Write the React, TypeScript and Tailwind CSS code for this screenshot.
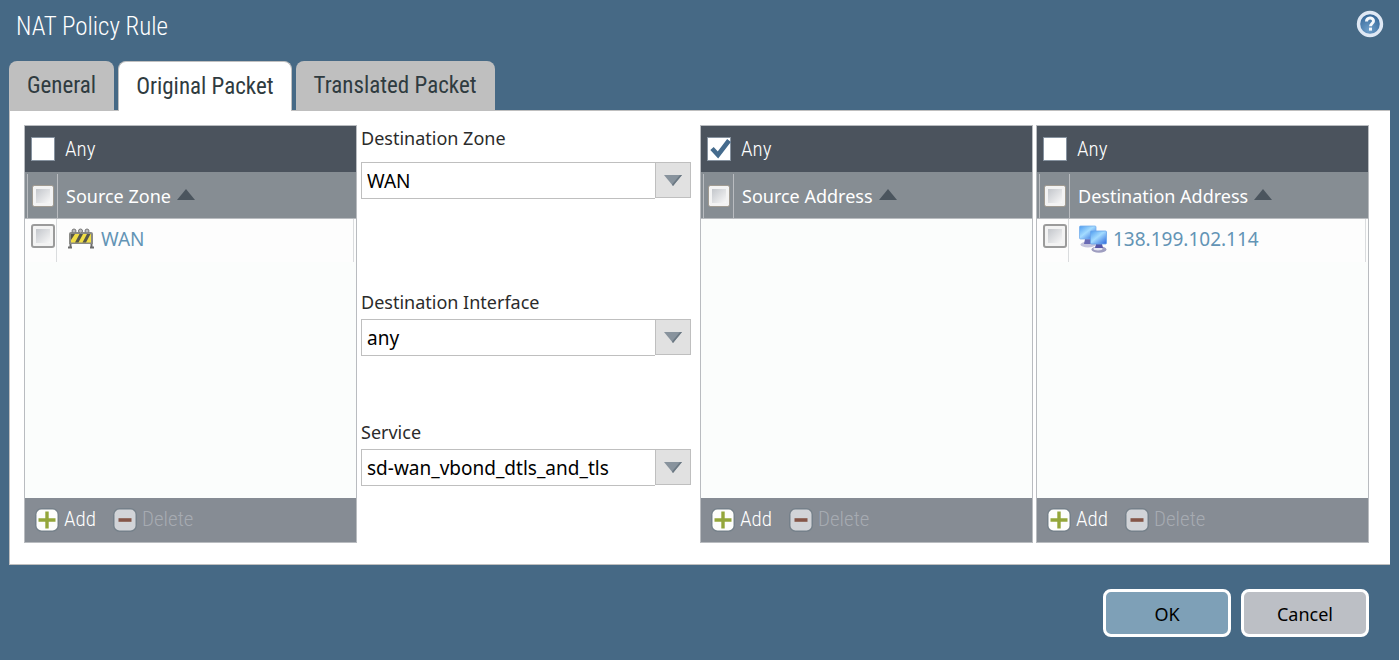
import { useState } from "react";
import type { ReactNode } from "react";

const CONDENSED = "font-['Liberation_Sans_Narrow','Arial_Narrow','Roboto_Condensed',sans-serif]";

function HelpIcon() {
  return (
    <svg viewBox="0 0 28 28" className="size-7" aria-hidden="true">
      <defs>
        <radialGradient id="help" cx="0.45" cy="0.75" r="0.8">
          <stop offset="0" stopColor="#6fa0cb" />
          <stop offset="1" stopColor="#2a5c8e" />
        </radialGradient>
      </defs>
      <circle cx="14" cy="14" r="11.5" fill="url(#help)" stroke="#dfe8f4" strokeWidth="3.4" />
      <path d="M10.500 11.600c0-4.600 7-4.600 7-.7 0 2.500-3 2.700-3 5.300" fill="none" stroke="#f4f8fc" strokeWidth="3" />
      <rect x="13" y="17.600" width="3" height="3" fill="#f4f8fc" />
    </svg>
  );
}

function BarrierIcon() {
  return (
    <svg viewBox="0 0 28 22" className="h-[22px] w-7 shrink-0" aria-hidden="true">
      <path d="M3.500 13v6M24.500 13v6M1 19.500h4M23 19.500h4" stroke="#6c6c6c" strokeWidth="2" fill="none" />
      <path d="M2 6q0-2 2-2h20q2 0 2 2v10H2z" fill="#8a8a86" />
      <circle cx="7" cy="3" r="2" fill="#bbb" stroke="#777" />
      <circle cx="13.500" cy="3" r="2" fill="#bbb" stroke="#777" />
      <circle cx="20" cy="3" r="2" fill="#bbb" stroke="#777" />
      <rect x="4" y="6" width="20" height="8.500" fill="#f0dd45" />
      <path d="M4 6h4l-4 6zM12.500 6H16l-4.500 8.500H8zM20 6h3.500L19 14.500h-3.500z" fill="#55554a" />
    </svg>
  );
}

function HostsIcon() {
  return (
    <svg viewBox="0 0 28 28" className="size-7 shrink-0" aria-hidden="true">
      <defs>
        <linearGradient id="screen" x1="0" y1="0" x2="1" y2="1">
          <stop offset="0" stopColor="#4f9cf0" />
          <stop offset="0.45" stopColor="#a4dcff" />
          <stop offset="1" stopColor="#2c66dc" />
        </linearGradient>
      </defs>
      <ellipse cx="9" cy="19.500" rx="7.500" ry="3" fill="#c4c3dc" />
      <path d="M6 14h6l1 5H5z" fill="#6a6ab4" />
      <rect x="0.500" y="1" width="16.500" height="13" rx="1" fill="url(#screen)" stroke="#78b0ec" strokeWidth="0.800" />
      <ellipse cx="20" cy="24.500" rx="7.500" ry="3.200" fill="#9f9ec0" />
      <ellipse cx="19" cy="23.800" rx="4.500" ry="1.700" fill="#e6e6f2" />
      <path d="M17 19h6l1 4h-8z" fill="#5656a8" />
      <rect x="11.500" y="6" width="16" height="13" rx="1" fill="url(#screen)" stroke="#6aa4ea" strokeWidth="0.800" />
    </svg>
  );
}

function SignIcon({ kind }: { kind: "plus" | "minus" }) {
  return (
    <svg viewBox="0 0 26 26" className="size-[26px]" aria-hidden="true">
      <rect x="1" y="1" width="24" height="24" rx="7" fill="#75808a" />
      <rect x="2.500" y="2.500" width="21" height="21" rx="5" fill={kind === "plus" ? "#fdfdfb" : "#d2d4d8"} />
      {kind === "plus" ? (
        <path d="M13 4.500v17M4.500 13h17" stroke="#94a63a" strokeWidth="3.400" />
      ) : (
        <path d="M6.500 13h13" stroke="#855548" strokeWidth="3.600" />
      )}
    </svg>
  );
}

function SmallCheck({ label, inHeader = false }: { label: string; inHeader?: boolean }) {
  return (
    <input
      type="checkbox"
      aria-label={label}
      className={`block appearance-none rounded-[1px] border-3 border-[#f3f3f3] bg-linear-to-br from-[#c3c6cb] to-[#f8f8f8] checked:from-[#466985] checked:to-[#7ea0b7] ${
        inHeader ? "size-5 outline-1 outline-[#a09b92]" : "size-5 outline-2 outline-[#9b9b9b]"
      }`}
    />
  );
}

type Row = { name: string; icon: ReactNode };

function ListPanel({ title, any = false, rows }: { title: string; any?: boolean; rows: Row[] }) {
  const [checked, setChecked] = useState(any);
  return (
    <section className="flex h-full min-h-[418px] flex-col border border-[#b9bcc0] bg-[#fbfdfc]">
      <label className={`flex h-[46px] items-center gap-[10px] bg-[#4b535d] pl-[6px] text-[21px] font-light text-white ${CONDENSED}`}>
        <span className="relative size-6">
          <input
            type="checkbox"
            checked={checked}
            onChange={(e) => setChecked(e.target.checked)}
            className="block size-6 appearance-none border border-[#8793a0] bg-white"
          />
          {checked && (
            <svg viewBox="0 0 24 24" className="pointer-events-none absolute inset-0 size-6" aria-hidden="true">
              <path d="M5 11.500l6 6.500L22 3.500" fill="none" stroke="#456b8d" strokeWidth="4.600" />
            </svg>
          )}
        </span>
        <span className="pt-px">Any</span>
      </label>
      <table className="w-full table-fixed border-separate border-spacing-0 text-left text-[19px]">
        <thead className="bg-[#868d93] text-white">
          <tr className="h-[47px]">
            <th className="w-[33px] border-b border-[#b9bcc0] p-0">
              <div className="mt-[2px] ml-[2px] flex h-11 items-center border-x border-[#b9bcc0] pl-[5px]">
                <SmallCheck label={`Select all in ${title}`} inHeader />
              </div>
            </th>
            <th className="border-b border-[#b9bcc0] p-0 pt-[3px] pl-2 text-[18px] font-normal">
              <span className="flex items-center gap-[6px] whitespace-nowrap">
                {title}
                <svg viewBox="0 0 18 11" className="mb-1 h-[11px] w-[18px]" aria-hidden="true">
                  <path d="M9 0l9 11H0z" fill="#4b555e" />
                </svg>
              </span>
            </th>
          </tr>
        </thead>
        <tbody>
          {rows.map((row) => (
            <tr key={row.name} className="bg-[#fdfdfd]">
              <td className="p-0">
                <div className="mr-px h-[43px] border-r border-[#dadcde] pt-[7px] pl-2">
                  <SmallCheck label={`Select ${row.name}`} />
                </div>
              </td>
              <td className="p-0 pr-[2px]">
                <div className="flex h-[43px] items-center gap-[6px] border-r border-[#dadcde] pb-[3px] pl-[9px]">
                  {row.icon}
                  <a href="#" className="text-[#6394b5]">{row.name}</a>
                </div>
              </td>
            </tr>
          ))}
        </tbody>
      </table>
      <div className={`mt-auto flex h-11 items-center gap-4 bg-[#868c94] pl-[9px] text-[21px] font-light ${CONDENSED}`}>
        <button type="button" className="flex items-center gap-1 text-white">
          <SignIcon kind="plus" />
          Add
        </button>
        <button type="button" disabled className="flex items-center gap-1 text-[#a6abb2]">
          <SignIcon kind="minus" />
          Delete
        </button>
      </div>
    </section>
  );
}

function SelectBox({ id, options }: { id: string; options: string[] }) {
  return (
    <div className="relative">
      <select id={id} className="block h-[37px] w-full appearance-none border border-[#bfbfbf] bg-white pt-px pr-10 pl-[5px] text-[19px] text-black">
        {options.map((o) => (
          <option key={o}>{o}</option>
        ))}
      </select>
      <span className="pointer-events-none absolute top-0 right-0 flex size-9 items-center justify-center border border-[#bfbfbf] bg-[#e1e1e1] shadow-[0_1px_0_white]">
        <svg viewBox="0 0 18 11" className="h-[11px] w-[18px]" aria-hidden="true">
          <path d="M0 0h18l-9 11z" fill="#88939d" />
          <path d="M18 0l-9 11-1-1.500L16 0z" fill="#6b7883" />
        </svg>
      </span>
    </div>
  );
}

const TABS = ["General", "Original Packet", "Translated Packet"];

export default function App() {
  const [tab, setTab] = useState("Original Packet");
  return (
    <main className="min-h-screen bg-[#466985] px-[9px] pb-6 font-['Noto_Sans',sans-serif]">
      <header className="flex h-[61px] items-start justify-between pr-[6px] pl-[7px]">
        <h1 className={`pt-[11px] text-[25px] leading-8 font-light text-white ${CONDENSED}`}>NAT Policy Rule</h1>
        <button type="button" aria-label="Help" className="mt-[10px]">
          <HelpIcon />
        </button>
      </header>
      <div role="tablist" className={`flex gap-1 text-[23px] text-[#2f3b40] ${CONDENSED}`}>
        {TABS.map((t) => (
          <button
            key={t}
            type="button"
            role="tab"
            aria-selected={t === tab}
            onClick={() => setTab(t)}
            className={`rounded-t-lg leading-[49px] ${
              t === tab ? "relative -mb-px h-[50px] border border-b-0 border-[#c0c0c0] bg-white px-[17px]" : "h-[49px] bg-[#bfbfbf] px-[18px]"
            }`}
          >
            {t}
          </button>
        ))}
      </div>
      <div className="grid grid-cols-[333fr_343fr_333fr_336fr] border border-r-0 border-[#bfbfbf] bg-white pt-[14px] pr-[21px] pb-[21px] pl-[14px]">
        <ListPanel title="Source Zone" rows={[{ name: "WAN", icon: <BarrierIcon /> }]} />
        <div className="pt-px pr-[9px] pl-1 text-[18px] leading-6 text-[#2b2b2b]">
          <label htmlFor="zone" className="mb-3 block">Destination Zone</label>
          <SelectBox id="zone" options={["WAN", "LAN", "DMZ"]} />
          <label htmlFor="iface" className="mt-[91px] mb-[5px] block">Destination Interface</label>
          <SelectBox id="iface" options={["any"]} />
          <label htmlFor="service" className="mt-16 mb-[5px] block">Service</label>
          <SelectBox id="service" options={["sd-wan_vbond_dtls_and_tls"]} />
        </div>
        <ListPanel title="Source Address" any rows={[]} />
        <div className="pl-[3px]">
          <ListPanel title="Destination Address" rows={[{ name: "138.199.102.114", icon: <HostsIcon /> }]} />
        </div>
      </div>
      <footer className="flex justify-end gap-[10px] pt-6 pr-[21px] text-[18px] text-black">
        <button type="button" className="h-12 w-32 rounded-lg border-3 border-white bg-[#7ea0b7] pt-[2px]">OK</button>
        <button type="button" className="h-12 w-32 rounded-lg border-3 border-white bg-[#bcbfc5] pt-[2px]">Cancel</button>
      </footer>
    </main>
  );
}
